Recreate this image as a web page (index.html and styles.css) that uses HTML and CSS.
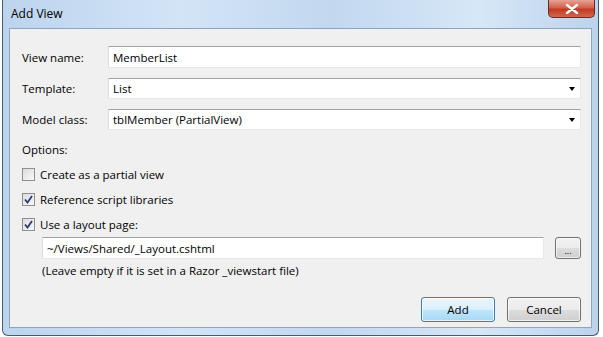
FILE: index.html
```html
<!DOCTYPE html>
<html lang="en">
<head>
  <meta charset="UTF-8">
  <title>Add View</title>
  <link rel="stylesheet" href="styles.css">
</head>
<body>
<div class="window">
  <div class="titlebar">
    <span class="title">Add View</span>
    <span class="close">
      <svg width="14" height="10" viewBox="0 0 14 10">
        <path d="M2 1 L12 9 M12 1 L2 9" stroke="#fff" stroke-width="2.4" stroke-linecap="round"/>
      </svg>
    </span>
  </div>

  <div class="content">
    <div class="fields">
      <label class="label">View name:</label>
      <div class="textbox">MemberList</div>

      <label class="label">Template:</label>
      <div class="textbox combo">List <span class="arrow"></span></div>

      <label class="label">Model class:</label>
      <div class="textbox combo">tblMember (PartialView) <span class="arrow"></span></div>
    </div>

    <div class="row">Options:</div>
    <div class="row">
      <span class="check"></span>
      Create as a partial view
    </div>
    <div class="row">
      <span class="check">
        <svg width="9" height="9" viewBox="0 0 9 9"><path d="M1 4.5 L3.5 7.5 L8 1" fill="none" stroke="#2b3a78" stroke-width="1.8"/></svg>
      </span>
      Reference script libraries
    </div>
    <div class="row">
      <span class="check">
        <svg width="9" height="9" viewBox="0 0 9 9"><path d="M1 4.5 L3.5 7.5 L8 1" fill="none" stroke="#2b3a78" stroke-width="1.8"/></svg>
      </span>
      Use a layout page:
    </div>

    <div class="layout-row">
      <div class="textbox layout">~/Views/Shared/_Layout.cshtml</div>
      <button class="btn browse">...</button>
    </div>
    <div class="hint">(Leave empty if it is set in a Razor _viewstart file)</div>

    <div class="actions">
      <button class="btn primary">Add</button>
      <button class="btn">Cancel</button>
    </div>
  </div>
</div>
</body>
</html>
```

FILE: styles.css
```css
body {
  margin: 0;
  background: #ffffff;
  font-family: "Open Sans", "Noto Sans", sans-serif;
  font-size: 11.5px;
  color: #000;
}

.window {
  margin-left: 2px;
  width: 597px;
  height: 336px;
  border: 1px solid #4a5a6e;
  border-top: none;
  border-radius: 0 0 6px 6px;
  padding: 0 6px 7px 6px;
  background: linear-gradient(90deg, #bcd4ee 0%, #d3e4f6 30%, #c2d8ef 55%, #d6e7f7 80%, #bcd3ec 100%);
  display: flex;
  flex-direction: column;
  box-sizing: border-box;
}

.titlebar {
  height: 28px;
  display: flex;
  align-items: center;
  justify-content: space-between;
  position: relative;
}

.title {
  padding-left: 2px;
  font-size: 12px;
  color: #000;
  margin-top: -2px;
}

.close {
  position: absolute;
  right: -3px;
  top: 0;
  width: 47px;
  height: 18px;
  border: 1px solid #6b2a24;
  border-top: none;
  border-radius: 0 0 5px 5px;
  background: linear-gradient(#e8a394 0%, #d4604c 45%, #c23a24 55%, #d2664c 100%);
  display: flex;
  align-items: center;
  justify-content: center;
  box-sizing: border-box;
}

.content {
  flex: 1;
  background: #f0f0f0;
  border: 1px solid #8ea6c2;
  padding: 17px 10px 0 12px;
  display: flex;
  flex-direction: column;
}

.fields {
  display: grid;
  grid-template-columns: 86px 1fr;
  grid-template-rows: 22px 21px 21px;
  row-gap: 10px;
  align-items: center;
}

.textbox {
  height: 100%;
  box-sizing: border-box;
  background: #fff;
  border: 1px solid #abadb3;
  border-color: #a0a3aa #e3e9ef #e3e9ef #dcdde3;
  padding: 0 4px;
  display: flex;
  align-items: center;
}

.combo {
  position: relative;
}

.arrow {
  position: absolute;
  right: 5px;
  top: 8px;
  width: 0;
  height: 0;
  border-left: 3.5px solid transparent;
  border-right: 3.5px solid transparent;
  border-top: 4px solid #000;
}

.row {
  height: 25px;
  display: flex;
  align-items: center;
}

.row:nth-of-type(2) {
  margin-top: 7px;
}

.check {
  width: 13px;
  height: 13px;
  box-sizing: border-box;
  border: 1px solid #8e8f8f;
  background: linear-gradient(135deg, #dcdcdc, #f8f8f8);
  margin-right: 5px;
  display: flex;
  align-items: center;
  justify-content: center;
}

.layout-row {
  display: flex;
  gap: 11px;
  height: 22px;
  margin-left: 20px;
}

.layout {
  flex: 1;
}

.hint {
  margin: 4px 0 0 20px;
  height: 16px;
  line-height: 16px;
}

.btn {
  font-family: inherit;
  font-size: 11.5px;
  color: #000;
  border: 1px solid #707070;
  border-radius: 3px;
  background: linear-gradient(#f2f2f2 0%, #ebebeb 50%, #dddddd 51%, #cfcfcf 100%);
  padding: 0;
  box-shadow: inset 0 0 0 1px rgba(255,255,255,0.7);
}

.browse {
  width: 26px;
  height: 22px;
  font-size: 9px;
  line-height: 1;
  padding-top: 4px;
}

.actions {
  display: flex;
  justify-content: flex-end;
  gap: 12px;
  margin-top: 18px;
}

.actions .btn {
  width: 74px;
  height: 25px;
}

.primary {
  border-color: #3c7fb1;
  background: linear-gradient(#eaf6fd 0%, #d9f0fc 50%, #bee6fd 51%, #a7d9f5 100%);
}
```
